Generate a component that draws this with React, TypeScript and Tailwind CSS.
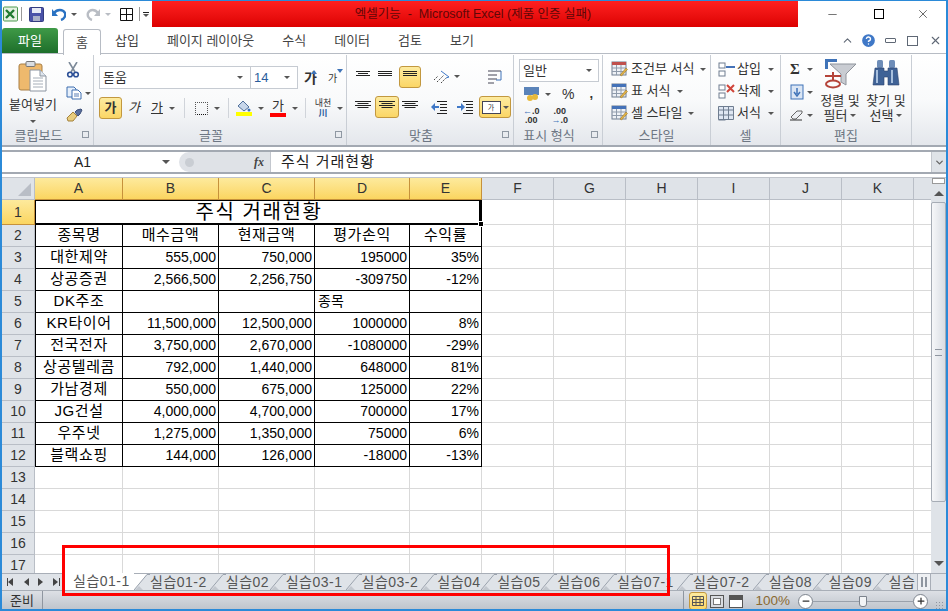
import type { ReactNode } from "react"
import { ChevronDown, ChevronUp, HelpCircle, Minus, Plus, X } from "lucide-react"

const KO = "font-['Liberation_Sans','Noto_Sans_CJK_KR',sans-serif]"

const COLS = ["A", "B", "C", "D", "E", "F", "G", "H", "I", "J", "K"]
const ROWS: [string, string, string, string, string][] = [
  ["종목명", "매수금액", "현재금액", "평가손익", "수익률"],
  ["대한제약", "555,000", "750,000", "195000", "35%"],
  ["상공증권", "2,566,500", "2,256,750", "-309750", "-12%"],
  ["DK주조", "", "", "종목", ""],
  ["KR타이어", "11,500,000", "12,500,000", "1000000", "8%"],
  ["전국전자", "3,750,000", "2,670,000", "-1080000", "-29%"],
  ["상공텔레콤", "792,000", "1,440,000", "648000", "81%"],
  ["가남경제", "550,000", "675,000", "125000", "22%"],
  ["JG건설", "4,000,000", "4,700,000", "700000", "17%"],
  ["우주넷", "1,275,000", "1,350,000", "75000", "6%"],
  ["블랙쇼핑", "144,000", "126,000", "-18000", "-13%"],
]
const SHEETS = ["실습01-2", "실습02", "실습03-1", "실습03-2", "실습04", "실습05", "실습06", "실습07-1", "실습07-2", "실습08", "실습09", "실습"]

function Caret({ className = "" }: { className?: string }) {
  return <span className={`inline-block w-0 h-0 border-x-[3px] border-x-transparent border-t-[3px] border-t-[#555] ${className}`} />
}

function Lines({ widths, gap = 2 }: { widths: number[]; gap?: number }) {
  return (
    <svg width="16" height="14" viewBox="0 0 16 14">
      {widths.map((w, i) => (
        <rect key={i} x={(16 - w) / 2} y={1 + i * gap} width={w} height="1" fill="#222" />
      ))}
    </svg>
  )
}

function Indent({ flip }: { flip?: boolean }) {
  return (
    <svg width="16" height="14" viewBox="0 0 16 14">
      <path d="M6 1.500h10M9 4.500h7M9 7.500h7M9 10.500h7M6 13.500h10" stroke="#222" />
      {flip ? <path d="M0 6h4V3l4 4-4 4V8H0z" fill="#3f78c7" /> : <path d="M8 6H4V3L0 7l4 4V8h4z" fill="#3f78c7" />}
    </svg>
  )
}

function Gold({ children, className = "" }: { children: ReactNode; className?: string }) {
  return (
    <div className={`flex items-center justify-center rounded-[3px] border border-[#c2983f] bg-gradient-to-b from-[#fdeb9f] to-[#fbd665] ${className}`}>
      {children}
    </div>
  )
}

function Group({ width, label, launcher, children }: { width: number; label: string; launcher?: boolean; children: ReactNode }) {
  return (
    <div className="flex flex-col shrink-0 border-r border-[#c9ced5] h-full" style={{ width }}>
      <div className="flex-1 min-h-0">{children}</div>
      <div className={`h-[19px] flex items-center justify-center relative text-[13px] text-[#6d7683] ${launcher ? "pr-[18px]" : ""}`}>
        {label}
        {launcher && <span className="absolute right-[4px] top-[5px] w-[7px] h-[7px] border border-[#8f98a3]" />}
      </div>
    </div>
  )
}

function ClipboardIcon() {
  return (
    <svg width="30" height="31" viewBox="0 0 30 31">
      <rect x="1" y="3" width="23" height="26" rx="2" fill="#eeb96d" stroke="#a87f45" />
      <rect x="8" y="0.5" width="9" height="5" rx="1" fill="#d9dde2" stroke="#777" />
      <path d="M12 9h10l6 6v15H12z" fill="#fff" stroke="#8b94a0" />
      <path d="M22 9v6h6" fill="#dfe6ee" stroke="#8b94a0" />
      <path d="M15 17h10M15 20h10M15 23h10M15 26h10" stroke="#a6aeb8" />
    </svg>
  )
}

function Scissors() {
  return (
    <svg width="14" height="16" viewBox="0 0 14 16">
      <path d="M3 0l6 10M11 0L5 10" stroke="#7d8a99" strokeWidth="1.6" />
      <circle cx="4" cy="12.5" r="2.3" fill="none" stroke="#2b4f96" strokeWidth="1.6" />
      <circle cx="10" cy="12.5" r="2.3" fill="none" stroke="#2b4f96" strokeWidth="1.6" />
    </svg>
  )
}

function CopyIcon() {
  return (
    <svg width="16" height="14" viewBox="0 0 16 14">
      <path d="M1 1h7l2 2v8H1z" fill="#e7f0fb" stroke="#3f6fb0" />
      <path d="M6 4h6l3 3v6H6z" fill="#fff" stroke="#3f6fb0" />
      <path d="M8 8h5M8 10h5" stroke="#5b7fb5" />
    </svg>
  )
}

function Brush() {
  return (
    <svg width="18" height="14" viewBox="0 0 18 14">
      <path d="M1 10l6-6 4 4-4 5H2z" fill="#e9cd7e" stroke="#a4823c" />
      <path d="M9 4l2-2 4-1 1 1-2 4-2 2z" fill="#5a6f9d" stroke="#3d4f79" />
    </svg>
  )
}

function SheetIcon({ accent = "#4472b8" }: { accent?: string }) {
  return (
    <svg width="17" height="16" viewBox="0 0 17 16">
      <rect x="1" y="1" width="14" height="13" fill="#eef1f6" stroke="#6f7d90" />
      <rect x="1" y="1" width="14" height="3" fill={accent} />
      <path d="M1 7h14M1 10.500h14M5.500 4v10M10 4v10" stroke="#8f9bab" />
      <path d="M9 14l6-7 1.500 1.500-6 6.500z" fill="#e3b345" stroke="#8c6b23" strokeWidth="0.5" />
    </svg>
  )
}

function FilterIcon() {
  return (
    <svg width="32" height="30" viewBox="0 0 32 30">
      <path d="M6 5h26L22 15v11l-5-3v-8z" fill="#c9ccd2" stroke="#8f949c" />
      <path d="M1 0h12v3H4v7H1z" fill="#3f73b8" />
      <ellipse cx="9" cy="25" rx="7" ry="3.500" fill="none" stroke="#b5443a" strokeWidth="2" />
      <path d="M1 17h16M9 13v8" stroke="#b5443a" strokeWidth="2" />
    </svg>
  )
}

function Binoculars() {
  return (
    <svg width="28" height="28" viewBox="0 0 28 28">
      <rect x="5" y="1" width="6" height="8" rx="1.500" fill="#6e8db8" />
      <rect x="17" y="1" width="6" height="8" rx="1.500" fill="#6e8db8" />
      <path d="M3 9h9v3h4V9h9l2 17H16v-8h-4v8H1z" fill="#3f6296" stroke="#2b4570" strokeWidth="0.6" />
      <path d="M5 11v13M20 11v13" stroke="#a8c0de" strokeWidth="2" />
    </svg>
  )
}

function TabSlash({ first }: { first?: boolean }) {
  return (
    <svg width="16" height="16" viewBox="0 0 16 16" className="shrink-0">
      {first && <path d="M0 0h13L0 16z" fill="#fff" />}
      <path d="M0 16L13 .500h3" fill="none" stroke="#9aa2ad" />
      <path d="M1 16h8l-4-4z" fill="#c3c8cf" />
    </svg>
  )
}

function Ribbon() {
  return (
    <div className="h-[92px] flex bg-gradient-to-b from-white via-[#f9fafb] to-[#e4e7ec] border-b-2 border-b-[#a3a9b2] text-[13px] text-[#333]">
      <Group width={92} label="클립보드" launcher>
        <div className="flex pl-[6px] pt-[6px]">
          <div className="w-[50px] flex flex-col items-center">
            <ClipboardIcon />
            <div className="mt-[3px] text-[13px] whitespace-nowrap">붙여넣기</div>
            <Caret className="mt-[5px]" />
          </div>
          <div className="flex flex-col items-start gap-[8px] pl-[8px] pt-[1px]">
            <Scissors />
            <div className="flex items-center gap-[3px]"><CopyIcon /><Caret /></div>
            <Brush />
          </div>
        </div>
      </Group>

      <Group width={253} label="글꼴" launcher>
        <div className="pl-[5px] pt-[11px]">
          <div className="flex items-center h-[23px]">
            <div className="w-[152px] h-[23px] border border-[#c6cbd2] bg-white flex items-center justify-between px-[3px]">돋움<Caret className="mr-[4px]" /></div>
            <div className="w-[47px] h-[23px] border border-l-0 border-[#c6cbd2] bg-white flex items-center justify-between px-[3px] text-[#2a5d9c]">14<Caret className="mr-[4px]" /></div>
            <div className="ml-[6px] w-[14px] flex items-start">
              <span className="text-[14px] font-bold leading-[16px]">가</span>
              <span className="-ml-[6px] w-0 h-0 border-x-[3px] border-x-transparent border-b-[4px] border-b-[#3f73b8]" />
            </div>
            <div className="ml-[10px] w-[14px] flex items-start">
              <span className="text-[10px] leading-[16px] mt-[2px]">가</span>
              <span className="w-0 h-0 border-x-[3px] border-x-transparent border-t-[4px] border-t-[#3f73b8]" />
            </div>
          </div>
          <div className="flex items-center mt-[8px] h-[22px]">
            <Gold className="w-[23px] h-[22px] font-bold">가</Gold>
            <span className="ml-[6px] italic">가</span>
            <span className="ml-[11px] underline">가</span>
            <Caret className="ml-[6px]" />
            <span className="ml-[9px] h-[20px] border-l border-[#d0d4da]" />
            <span className="ml-[10px] w-[13px] h-[13px] border border-dotted border-[#555] border-b-[#111]" />
            <Caret className="ml-[6px]" />
            <span className="ml-[8px] h-[20px] border-l border-[#d0d4da]" />
            <div className="ml-[7px] flex flex-col items-center w-[16px]">
              <svg width="15" height="12" viewBox="0 0 15 12"><path d="M2 6l5-5 6 6-5 4z" fill="#c7d6ea" stroke="#4f6f9b" /><circle cx="13" cy="10" r="1.500" fill="#3f73b8" /></svg>
              <span className="w-[16px] h-[4px] bg-[#ffff00]" />
            </div>
            <Caret className="ml-[6px]" />
            <div className="ml-[6px] flex flex-col items-center w-[16px] leading-[13px]">
              <span>가</span>
              <span className="w-[16px] h-[4px] bg-[#ff0000] mt-[1px]" />
            </div>
            <Caret className="ml-[6px]" />
            <span className="ml-[7px] h-[20px] border-l border-[#d0d4da]" />
            <div className="ml-[8px] w-[18px] flex flex-col items-center text-[9px] leading-[10px]"><span>내천</span><span className="text-[#2a5d9c] font-bold">川</span></div>
            <Caret className="ml-[5px]" />
          </div>
        </div>
      </Group>

      <Group width={167} label="맞춤" launcher>
        <div className="flex pt-[10px]">
          <div className="pl-[8px] w-[132px]">
            <div className="flex items-center gap-[6px] h-[23px]">
              <Lines widths={[14, 10, 14]} />
              <Lines widths={[14, 14, 14]} />
              <Gold className="w-[22px] h-[22px]"><Lines widths={[14, 14, 14]} /></Gold>
              <svg className="ml-[6px]" width="18" height="14" viewBox="0 0 18 14">
                <path d="M1 10l4-4M4 12l7-7M8 13l5-5" stroke="#444" strokeDasharray="1.500 1" />
                <path d="M8 1l8 6-3 1" fill="none" stroke="#3f78c7" />
              </svg>
              <Caret className="-ml-[3px]" />
            </div>
            <div className="flex items-center gap-[3px] h-[23px] mt-[7px]">
              <Lines widths={[16, 11, 16, 11]} />
              <Gold className="w-[24px] h-[22px] ml-[1px]"><Lines widths={[16, 11, 16, 11]} /></Gold>
              <Lines widths={[16, 11, 16, 11]} />
              <span className="w-[7px]" />
              <Indent />
              <span className="w-[4px]" />
              <Indent flip />
            </div>
          </div>
          <div className="flex flex-col items-center w-[32px]">
            <svg className="mt-[4px]" width="16" height="16" viewBox="0 0 16 16"><path d="M1 2h13M1 6h9M1 10h9M1 14h6" stroke="#445" /><path d="M14 2v9h-5" fill="none" stroke="#3f73b8" /></svg>
            <Gold className="w-[32px] h-[22px] mt-[11px] gap-[2px]">
              <span className="w-[19px] h-[13px] border border-[#445] bg-white text-[7px] leading-[11px] text-center">가</span>
              <Caret />
            </Gold>
          </div>
        </div>
      </Group>

      <Group width={89} label="표시 형식" launcher>
        <div className="pl-[5px] pt-[4px]">
          <div className="w-[80px] h-[23px] border border-[#c6cbd2] bg-white flex items-center justify-between px-[3px]">일반<Caret className="mr-[3px]" /></div>
          <div className="flex items-center h-[22px] mt-[1px] pl-[4px]">
            <svg width="17" height="16" viewBox="0 0 17 16"><rect x="1" y="1" width="15" height="8" fill="#5a83b9" /><circle cx="12" cy="11" r="3" fill="#e7b93a" /><circle cx="7" cy="12" r="3" fill="#e7b93a" /></svg>
            <Caret className="ml-[5px]" />
            <span className="ml-[11px] text-[14px]">%</span>
            <span className="ml-[15px] font-bold">,</span>
          </div>
          <div className="flex items-center h-[22px] pl-[4px] text-[9px] leading-[9px] font-bold gap-[12px] text-[#333]">
            <span className="text-center"><span className="text-[#3f73b8]">←</span>.0<br />.00</span>
            <span className="text-center">.00<br /><span className="text-[#3f73b8]">→</span>.0</span>
          </div>
        </div>
      </Group>

      <Group width={108} label="스타일">
        <div className="pl-[8px] pt-[3px] flex flex-col">
          {["조건부 서식", "표 서식", "셀 스타일"].map((t, i) => (
            <div key={t} className="h-[22px] flex items-center gap-[3px] whitespace-nowrap">
              <SheetIcon accent={i === 0 ? "#c0504d" : "#4472b8"} />{t}<Caret className="ml-[3px]" />
            </div>
          ))}
        </div>
      </Group>

      <Group width={70} label="셀">
        <div className="pl-[7px] pt-[3px] flex flex-col">
          {["삽입", "삭제", "서식"].map((t, i) => (
            <div key={t} className="h-[22px] flex items-center gap-[2px] whitespace-nowrap">
              <svg width="17" height="15" viewBox="0 0 17 15">
                <rect x="1" y="1" width="6" height="5" fill="#fff" stroke="#6f7d90" />
                <rect x="1" y="9" width="6" height="5" fill="#fff" stroke="#6f7d90" />
                {i === 0 && <path d="M8 5h9" stroke="#4472b8" strokeWidth="2" />}
                {i === 1 && <path d="M9 1l7 7M16 1l-7 7" stroke="#d0453a" strokeWidth="2" />}
                {i === 2 && <path d="M.5.500h15v13H.5zM.5 4h15M.5 9h15M5.500 .500v13M10.500 .500v13" fill="#dfe7f3" stroke="#6f7d90" />}
              </svg>
              {t}<Caret className="ml-[5px]" />
            </div>
          ))}
        </div>
      </Group>

      <Group width={131} label="편집">
        <div className="flex pt-[3px] pl-[9px]">
          <div className="w-[28px] flex flex-col text-[#333]">
            <div className="h-[22px] flex items-center gap-[4px]"><span className="text-[15px] font-bold w-[13px] font-['Liberation_Serif',serif]">Σ</span><Caret /></div>
            <div className="h-[24px] flex items-center gap-[3px]">
              <svg width="14" height="16" viewBox="0 0 14 16"><rect x="1" y="1" width="12" height="14" fill="#dbe6f4" stroke="#3f73b8" /><path d="M7 4v6M4 8l3 4 3-4" stroke="#3f73b8" strokeWidth="1.500" fill="none" /></svg>
              <Caret />
            </div>
            <div className="h-[22px] flex items-center gap-[3px]">
              <svg width="14" height="12" viewBox="0 0 14 12"><path d="M1 8l6-6h5v2l-6 6H3z" fill="#eef0f4" stroke="#666" /><path d="M0 11h12" stroke="#333" /></svg>
              <Caret />
            </div>
          </div>
          <div className="w-[46px] flex flex-col items-center -ml-[1px] leading-[15px] pt-[1px] -mr-[3px]">
            <FilterIcon />
            <div className="whitespace-nowrap mt-[4px]">정렬 및</div>
            <div className="flex items-center gap-[3px]">필터<Caret /></div>
          </div>
          <div className="w-[46px] flex flex-col items-center ml-[3px] leading-[15px] pt-[1px]">
            <Binoculars />
            <div className="whitespace-nowrap mt-[6px]">찾기 및</div>
            <div className="flex items-center gap-[3px]">선택<Caret /></div>
          </div>
        </div>
      </Group>
    </div>
  )
}

function Sheet() {
  const hdr = "border-r border-b border-[#b9bec6] flex items-center justify-center text-[#333]"
  const grid = "border-r border-b border-[#d9d9d9]"
  const cell = "border-r border-b border-black flex items-center whitespace-nowrap text-[14px] text-black overflow-hidden"
  return (
    <div className="flex-1 min-w-0 grid grid-cols-[33px_88px_96px_96px_95px_72px_72px_72px_72px_72px_72px_72px_18px] grid-rows-[22px_25px_repeat(16,22px)] h-[395px] overflow-hidden bg-white text-[14px]">
      <div className={`${hdr} bg-[#dfe3e8] items-end justify-end p-[3px]`}>
        <span className="w-0 h-0 border-l-[13px] border-l-transparent border-b-[13px] border-b-[#b9bec6]" />
      </div>
      {COLS.map((c, i) => (
        <div key={c} className={i < 5 ? "flex items-center justify-center border-r border-b border-[#c6913b] bg-gradient-to-b from-[#fdea9c] to-[#fbd55f] text-[#333]" : `${hdr} bg-[#dfe3e8]`}>{c}</div>
      ))}
      <div className="border-b border-[#b9bec6] bg-[#dfe3e8]" />

      <div className="flex items-center justify-center border-r border-b border-[#c6913b] bg-gradient-to-b from-[#fdea9c] to-[#fbd55f] text-[#333]">1</div>
      <div className="col-span-5 relative border border-black border-r-[3px] border-b-2 flex items-center justify-center pl-[3px] text-[20px] tracking-[1.600px] text-black">
        주식 거래현황
        <span className="absolute right-[-5px] bottom-[-4px] w-[6px] h-[6px] bg-black border border-white" />
      </div>
      {COLS.slice(5).map((c) => <div key={c} className={grid} />)}
      <div className="border-b border-[#d9d9d9]" />

      {ROWS.map((r, i) => (
        <Row key={i} n={i + 2} values={r} hdr={hdr} grid={grid} cell={cell} />
      ))}
      {[13, 14, 15, 16, 17].map((n) => (
        <Row key={n} n={n} hdr={hdr} grid={grid} cell={cell} />
      ))}
    </div>
  )
}

function Row({ n, values, hdr, grid, cell }: { n: number; values?: string[]; hdr: string; grid: string; cell: string }) {
  return (
    <>
      <div className={`${hdr} bg-[#dfe3e8]`}>{n}</div>
      {values
        ? values.map((v, i) => {
            const isLabel = i === 0 || n === 2
            const isLeft = v === "종목"
            return (
              <div
                key={i}
                className={`${cell} ${i === 0 ? "border-l" : ""} ${isLabel ? "justify-center text-[15px] tracking-[0.600px]" : isLeft ? "justify-start pl-[3px] text-[14px]" : "justify-end pr-[2px]"}`}
              >
                {v}
              </div>
            )
          })
        : COLS.slice(0, 5).map((c) => <div key={c} className={grid} />)}
      {COLS.slice(5).map((c) => <div key={c} className={grid} />)}
      <div className="border-b border-[#d9d9d9]" />
    </>
  )
}

export default function App() {
  return (
    <div className={`w-[948px] h-[611px] overflow-hidden flex flex-col bg-white border-x-2 border-b-2 border-t border-[#2b8ad8] ${KO}`}>
      {/* title bar */}
      <div className="h-[26px] flex shrink-0">
        <div className="w-[150px] flex items-center pl-[1px]">
          <svg width="15" height="16" viewBox="0 0 15 16">
            <rect x="0.500" y="1" width="14" height="14" rx="1" fill="#e6f1e3" stroke="#4c9a4f" />
            <path d="M3 4l8 8M11 4l-8 8" stroke="#1f7a31" strokeWidth="2.400" />
          </svg>
          <span className="ml-[3px] h-[14px] border-l border-[#999]" />
          <svg className="ml-[7px]" width="15" height="15" viewBox="0 0 15 15">
            <rect x="0.500" y="0.500" width="14" height="14" rx="1" fill="#4a52a8" stroke="#333c80" />
            <rect x="3" y="1" width="9" height="5" fill="#e7eaf5" />
            <rect x="4" y="9" width="7" height="5" fill="#aab0c8" />
          </svg>
          <svg className="ml-[8px]" width="14" height="13" viewBox="0 0 14 13"><path d="M2 5c3-4 9-4 11 0 1 3-1 6-4 7" fill="none" stroke="#2a72c2" strokeWidth="2.400" /><path d="M0 1v7h6z" fill="#2a72c2" /></svg>
          <Caret className="ml-[5px] border-t-[#222]" />
          <svg className="ml-[9px]" width="14" height="13" viewBox="0 0 14 13"><path d="M12 5C9 1 4 1 2 5c-1 3 1 6 4 7" fill="none" stroke="#b9bdc4" strokeWidth="2.400" /><path d="M14 1v7H8z" fill="#b9bdc4" /></svg>
          <Caret className="ml-[5px] border-t-[#b9bdc4]" />
          <svg className="ml-[9px]" width="13" height="13" viewBox="0 0 13 13"><path d="M0.500 0.500h12v12h-12zM6.500 0.500v12M0.500 6.500h12" fill="none" stroke="#111" /></svg>
          <span className="ml-[6px] h-[14px] border-l border-[#999]" />
          <span className="ml-[3px] flex flex-col items-center gap-[1px]"><span className="w-[6px] h-[1px] bg-[#222]" /><Caret className="border-t-[#222]" /></span>
        </div>
        <div className="w-[646px] bg-gradient-to-b from-[#ff1f1f] to-[#dc0000] flex items-center justify-center pr-[4px] text-[12.500px] text-[#5f0707] whitespace-pre">
          엑셀기능  -  Microsoft Excel (제품 인증 실패)
        </div>
        <div className="flex-1 flex items-center justify-between pl-[28px] pr-[16px]">
          <Minus size={13} strokeWidth={1} className="text-black" />
          <span className="w-[10px] h-[10px] border border-black ml-[2px]" />
          <X size={14} strokeWidth={1} className="text-black" />
        </div>
      </div>

      {/* tabs */}
      <div className="h-[28px] shrink-0 flex items-end relative text-[13px] text-[#444] pb-[2px]">
        <div className="absolute left-[-1px] right-[-1px] bottom-0 h-[2px] border-t border-[#b7bcc4]" />
        <div className="w-[56px] h-[25px] rounded-t-[3px] bg-gradient-to-b from-[#3f9a47] to-[#1d6f2b] text-white flex items-center justify-center">파일</div>
        <div className="relative z-10 ml-[5px] w-[38px] h-[26px] -mb-[2px] rounded-t-[3px] border border-b-0 border-[#b7bcc4] bg-white flex items-center justify-center">홈</div>
        <div className="flex items-center gap-[28px] ml-[14px] h-[25px]">
          <span>삽입</span>
          <span>페이지 레이아웃</span>
          <span>수식</span>
          <span>데이터</span>
          <span>검토</span>
          <span>보기</span>
        </div>
        <div className="ml-auto flex items-center h-[25px] gap-[6px] pr-[4px] text-[#5f6875]">
          <ChevronUp size={13} />
          <HelpCircle size={17} fill="#3f78c7" className="text-white" />
          <span className="w-[11px] h-[5px] ml-[2px] border border-[#5f6875] rounded-[1px]" />
          <span className="ml-[5px] w-[11px] h-[10px] border border-[#5f6875]" />
          <X size={13} className="ml-[5px]" />
        </div>
      </div>

      <Ribbon />

      {/* formula bar */}
      <div className="mt-[3px] h-[24px] shrink-0 flex border-y-2 border-[#a3a9b2] bg-white text-[14px] text-[#222]">
        <div className="w-[177px] flex items-center">
          <span className="w-[160px] text-center pl-[1px]">A1</span>
          <Caret className="border-x-[4px] border-t-[4px] border-t-[#333]" />
        </div>
        <div className="w-[92px] bg-[#dfe2e7] rounded-l-[11px] flex items-center justify-between pl-[6px] pr-[6px] border-r border-[#c3c7ce]">
          <span className="w-[9px] h-[9px] rounded-full bg-[#c9cdd3]" />
          <span className="font-['Liberation_Serif',serif] italic font-bold text-[12px] text-[#444]">fx</span>
        </div>
        <div className="flex-1 flex items-center pl-[10px] text-[15px] tracking-[1px]">주식 거래현황</div>
        <div className="w-[15px] bg-[#dfe3e8] border-l border-[#c3c7ce] flex items-center justify-center">
          <ChevronDown size={11} strokeWidth={3} className="text-[#666]" />
        </div>
      </div>

      {/* grid + scrollbar */}
      <div className="mt-[3px] flex shrink-0 border-t border-[#c0c4cb]">
        <Sheet />
        <div className="w-[15px] shrink-0 h-[395px] bg-[#dfe3e8] flex flex-col items-center">
          <span className="w-[13px] h-[6px] border border-[#999] bg-white" />
          <span className="mt-[7px] w-0 h-0 border-x-[5px] border-x-transparent border-b-[5px] border-b-[#555]" />
          <div className="mt-[6px] w-full h-[300px] border border-[#a6acb5] rounded-[2px] bg-gradient-to-r from-[#f6f7f9] to-[#d9dde3] flex items-center justify-center">
            <span className="w-[7px] h-[7px] border-y border-[#8f96a0]" />
          </div>
          <span className="mt-auto mb-[7px] w-0 h-0 border-x-[5px] border-x-transparent border-t-[5px] border-t-[#555]" />
        </div>
      </div>

      {/* sheet tabs */}
      <div className="h-[18px] shrink-0 flex bg-[#dfe3e8] border-t border-[#a8aeb7] border-b border-b-[#a8aeb7] text-[14px] tracking-[0.500px] text-[#555] whitespace-nowrap">
        <div className="w-[60px] flex items-center pl-[5px] gap-[7px] text-[#555]">
          <span className="w-[7px] h-[8px] border-l border-[#444] flex"><span className="w-0 h-0 border-y-[4px] border-y-transparent border-r-[5px] border-r-[#444]" /></span>
          <span className="w-0 h-0 border-y-[4px] border-y-transparent border-r-[5px] border-r-[#444] ml-[3px]" />
          <span className="w-0 h-0 border-y-[4px] border-y-transparent border-l-[5px] border-l-[#444] ml-[2px]" />
          <span className="w-[7px] h-[8px] border-r border-[#444] flex ml-[3px]"><span className="w-0 h-0 border-y-[4px] border-y-transparent border-l-[5px] border-l-[#444]" /></span>
        </div>
        <div className="bg-white w-[72px] pl-[11px] flex items-center -mt-px h-[17px] shrink-0">실습01-1</div>
        <div className="flex-1 min-w-0 flex overflow-hidden">
          {SHEETS.map((s, i) => (
            <div key={s} className="flex items-center shrink-0 h-full">
              <TabSlash first={i === 0} />
              <span className={s.includes("-") ? "pr-[3px]" : "pr-[0.600px]"}>{s}</span>
            </div>
          ))}
        </div>
        <div className="w-[14px] shrink-0 flex items-center justify-center gap-[2px] bg-[#eef0f3] border-x border-[#a8aeb7]">
          <span className="w-[2px] h-[10px] bg-[#8f96a0]" /><span className="w-[2px] h-[10px] bg-[#8f96a0]" />
        </div>
        <div className="w-[15px] shrink-0" />
      </div>

      {/* status bar */}
      <div className="flex-1 flex items-center bg-gradient-to-b from-[#dde0e5] to-[#bcc2ca] text-[13px] text-[#333]">
        <div className="w-[41px] h-full flex items-center pl-[8px] border-r border-[#8f96a0]">준비</div>
        <div className="ml-auto h-full flex items-center border-l border-[#8f96a0] pl-[5px] pr-[2px]">
          <Gold className="w-[18px] h-[18px]"><svg width="12" height="10" viewBox="0 0 12 10"><path d="M.5.500h11v9H.5zM.5 3.500h11M.5 6.500h11M4 .500v9M8 .500v9" fill="none" stroke="#555" /></svg></Gold>
          <span className="ml-[3px] w-[14px] h-[13px] border border-[#555] bg-[#d9dce1] flex items-center justify-center"><span className="w-[8px] h-[7px] border border-[#777] bg-white" /></span>
          <span className="ml-[5px] w-[14px] h-[13px] border border-[#555] bg-white border-t-[5px]" />
          <span className="ml-[12px] text-[#8a6a32] text-[13.500px]">100%</span>
          <span className="ml-[8px] w-[15px] h-[15px] rounded-full border border-[#7c838d] bg-white flex items-center justify-center"><Minus size={10} strokeWidth={3} /></span>
          <div className="w-[100px] h-px bg-[#9aa1ab] flex justify-center">
            <span className="w-[8px] h-[11px] -mt-[5px] bg-[#f2f4f6] border border-[#7c838d] rounded-b-[3px] ml-[-1px]" />
          </div>
          <span className="w-[15px] h-[15px] rounded-full border border-[#7c838d] bg-white flex items-center justify-center"><Plus size={10} strokeWidth={3} /></span>
          <span className="ml-[7px] w-[9px] h-[9px] self-end mb-[1px] bg-[radial-gradient(#8f96a0_1px,transparent_1px)] bg-[length:3px_3px]" />
        </div>
      </div>

      {/* red annotation box */}
      <div className="fixed left-[62px] top-[545px] w-[608px] h-[51px] border-[3px] border-[#ff0000] pointer-events-none" />
    </div>
  )
}
